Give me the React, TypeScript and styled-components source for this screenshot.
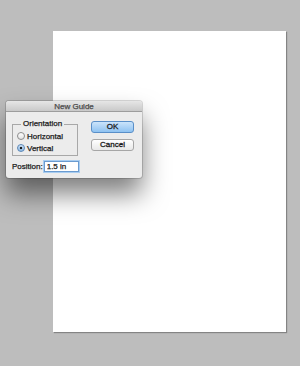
import React from 'react';
import styled, { createGlobalStyle } from 'styled-components';

const GlobalStyle = createGlobalStyle`
	html, body {
		margin: 0;
		padding: 0;
		background: #bdbdbd;
	}
	* {
		box-sizing: border-box;
	}
`;

const App = () => {
	return (
		<>
			<GlobalStyle />
			<Workspace>
				<Page />
				<Dialog>
					<TitleBar>New Guide</TitleBar>
					<Body>
						<Top>
							<Group>
								<Legend>Orientation</Legend>
								<RadioRow>
									<Radio />
									<span>Horizontal</span>
								</RadioRow>
								<RadioRow>
									<Radio checked />
									<span>Vertical</span>
								</RadioRow>
							</Group>
							<Buttons>
								<Button primary>OK</Button>
								<Button>Cancel</Button>
							</Buttons>
						</Top>
						<PositionRow>
							<span>Position:</span>
							<Input defaultValue="1.5 in" />
						</PositionRow>
					</Body>
				</Dialog>
			</Workspace>
		</>
	);
};

export default App;

const Workspace = styled.div`
	position: relative;
	width: 300px;
	height: 366px;
	padding: 31px 0 0 53px;
	background: #bdbdbd;
	font-family: 'Liberation Sans', Arial, sans-serif;
	font-size: 8px;
	color: #1a1a1a;
	-webkit-text-stroke: 0.25px currentColor;
`;

const Page = styled.div`
	width: 233px;
	height: 301px;
	background: #fff;
	box-shadow: 1px 1px 1px rgba(0, 0, 0, 0.3);
`;

const Dialog = styled.div`
	position: absolute;
	left: 6px;
	top: 101px;
	width: 136px;
	height: 77px;
	background: #ececec;
	border-radius: 3px;
	box-shadow: 0 16px 26px rgba(0, 0, 0, 0.5), 0 0 0 1px rgba(0, 0, 0, 0.15);
	overflow: hidden;
`;

const TitleBar = styled.div`
	height: 11px;
	line-height: 11px;
	text-align: center;
	color: #4a4a4a;
	background: linear-gradient(#e6e6e6, #c9c9c9);
	border-bottom: 1px solid #9d9d9d;
`;

const Body = styled.div`
	display: flex;
	flex-direction: column;
	padding: 8px 8px 0 6px;
	gap: 5px;
`;

const Top = styled.div`
	display: flex;
	justify-content: space-between;
`;

const Group = styled.div`
	position: relative;
	width: 66px;
	height: 32px;
	margin-top: 4px;
	border: 1px solid #a8a8a8;
	display: flex;
	flex-direction: column;
	justify-content: center;
	gap: 3px;
	padding: 4px 0 0 4px;
`;

const Legend = styled.span`
	position: absolute;
	left: 8px;
	top: -6px;
	padding: 0 2px;
	background: #ececec;
`;

const RadioRow = styled.label`
	display: flex;
	align-items: center;
	gap: 2px;
	height: 9px;
`;

const Radio = styled.span<{ checked?: boolean }>`
	width: 8px;
	height: 8px;
	border-radius: 50%;
	border: 1px solid ${(p) => (p.checked ? '#5b87b6' : '#8c8c8c')};
	background: ${(p) =>
		p.checked
			? 'radial-gradient(circle, #1a1a1a 0 1.3px, transparent 1.6px), linear-gradient(#cfe3f7, #8fbbe6)'
			: 'linear-gradient(#ffffff, #e2e2e2)'};
`;

const Buttons = styled.div`
	display: flex;
	flex-direction: column;
	gap: 6px;
	padding-top: 1px;
`;

const Button = styled.button<{ primary?: boolean }>`
	width: 43px;
	height: 12px;
	padding: 0;
	border-radius: 3px;
	font-family: inherit;
	font-size: 8px;
	line-height: 10px;
	color: #1a1a1a;
	-webkit-text-stroke: 0.3px currentColor;
	border: 1px solid ${(p) => (p.primary ? '#5a8fc8' : '#a6a6a6')};
	background: ${(p) =>
		p.primary ? 'linear-gradient(#cbe4fb, #8ec2f1)' : 'linear-gradient(#ffffff, #e8e8e8)'};
`;

const PositionRow = styled.div`
	display: flex;
	align-items: center;
	gap: 1px;
`;

const Input = styled.input`
	width: 35px;
	height: 11px;
	padding: 0 2px;
	font-family: inherit;
	font-size: 8px;
	color: #1a1a1a;
	-webkit-text-stroke: 0.25px currentColor;
	border: 1px solid #6a9bd0;
	box-shadow: 0 0 0 1px #a9cdf0;
	background: #fff;
	outline: none;
`;
